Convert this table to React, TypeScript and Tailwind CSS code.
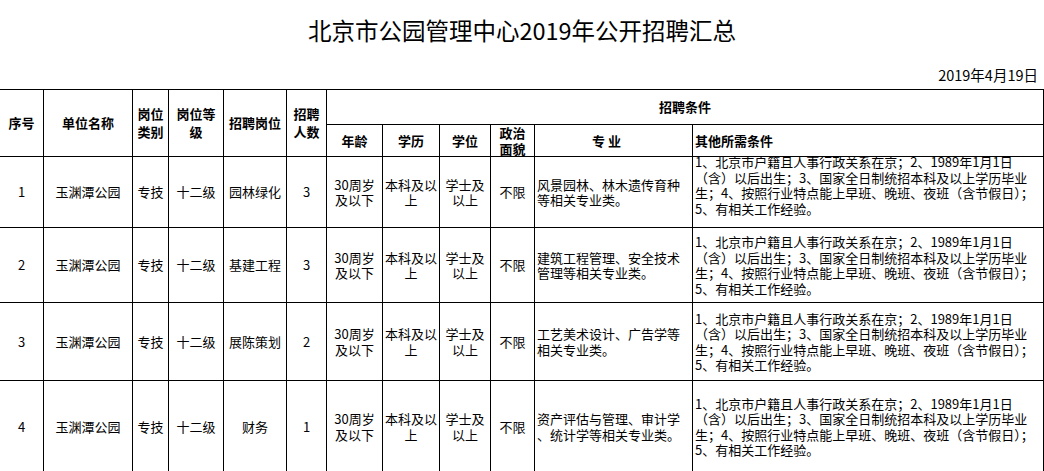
const rows = [
  {
    no: '1',
    post: '园林绿化',
    num: '3',
    major: ['风景园林、林木遗传育种', '等相关专业类。'],
    lift: true,
  },
  {
    no: '2',
    post: '基建工程',
    num: '3',
    major: ['建筑工程管理、安全技术', '管理等相关专业类。'],
    lift: false,
  },
  {
    no: '3',
    post: '展陈策划',
    num: '2',
    major: ['工艺美术设计、广告学等', '相关专业类。'],
    lift: false,
  },
  {
    no: '4',
    post: '财务',
    num: '1',
    major: ['资产评估与管理、审计学', '、统计学等相关专业类。'],
    lift: false,
  },
];

const otherLines = [
  '1、北京市户籍且人事行政关系在京；2、1989年1月1日',
  '（含）以后出生；3、国家全日制统招本科及以上学历毕业',
  '生；4、按照行业特点能上早班、晚班、夜班（含节假日）；',
  '5、有相关工作经验。',
];

const cell = 'flex items-center justify-center border-r border-b border-black text-center';

function Lines({ lines }: { lines: string[] }) {
  return (
    <div>
      {lines.map((line) => (
        <div key={line} className="whitespace-nowrap">
          {line}
        </div>
      ))}
    </div>
  );
}

export default function App() {
  return (
    <div className="h-[471px] w-[1044px] overflow-hidden bg-white font-['Noto_Sans_CJK_SC',sans-serif] text-black">
      <div className="flex h-[62px] items-center justify-center text-[23.5px] leading-none">
        北京市公园管理中心2019年公开招聘汇总
      </div>
      <div className="flex h-[27px] items-center justify-end pr-[6px] text-[14.5px] leading-none">
        2019年4月19日
      </div>

      <div className="grid grid-cols-[44px_89px_36px_55px_63px_40px_56px_57px_51px_44px_158px_351px] grid-rows-[35px_32px_71px_75px_78px_92px] border-t border-black text-[13px] leading-[15.5px]">
        {/* header */}
        <div className={`${cell} row-span-2 font-bold`}>序号</div>
        <div className={`${cell} row-span-2 font-bold`}>单位名称</div>
        <div className={`${cell} row-span-2 font-bold leading-[18px]`}>
          岗位
          <br />
          类别
        </div>
        <div className={`${cell} row-span-2 font-bold leading-[18px]`}>
          岗位等
          <br />级
        </div>
        <div className={`${cell} row-span-2 font-bold`}>招聘岗位</div>
        <div className={`${cell} row-span-2 font-bold leading-[18px]`}>
          招聘
          <br />
          人数
        </div>
        <div className={`${cell} col-span-6 font-bold`}>招聘条件</div>
        <div className={`${cell} font-bold`}>年龄</div>
        <div className={`${cell} font-bold`}>学历</div>
        <div className={`${cell} font-bold`}>学位</div>
        <div className={`${cell} font-bold leading-[16px]`}>
          政治
          <br />
          面貌
        </div>
        <div className={`${cell} pr-[14px] font-bold`}>专&nbsp;业</div>
        <div className="flex items-center border-r border-b border-black pl-[2px] font-bold">
          其他所需条件
        </div>

        {/* body */}
        {rows.map((r) => (
          <div key={r.no} className="contents">
            <div className={cell}>{r.no}</div>
            <div className={cell}>玉渊潭公园</div>
            <div className={cell}>专技</div>
            <div className={cell}>十二级</div>
            <div className={cell}>{r.post}</div>
            <div className={cell}>{r.num}</div>
            <div className={cell}>
              30周岁
              <br />
              及以下
            </div>
            <div className={cell}>
              本科及以
              <br />上
            </div>
            <div className={cell}>
              学士及
              <br />
              以上
            </div>
            <div className={cell}>不限</div>
            <div className="flex items-center border-r border-b border-black pl-[2px]">
              <Lines lines={r.major} />
            </div>
            <div
              className={`flex items-center border-r border-b border-black pl-[2px] ${
                r.lift ? 'pb-[14px]' : ''
              }`}
            >
              <Lines lines={otherLines} />
            </div>
          </div>
        ))}
      </div>
    </div>
  );
}
